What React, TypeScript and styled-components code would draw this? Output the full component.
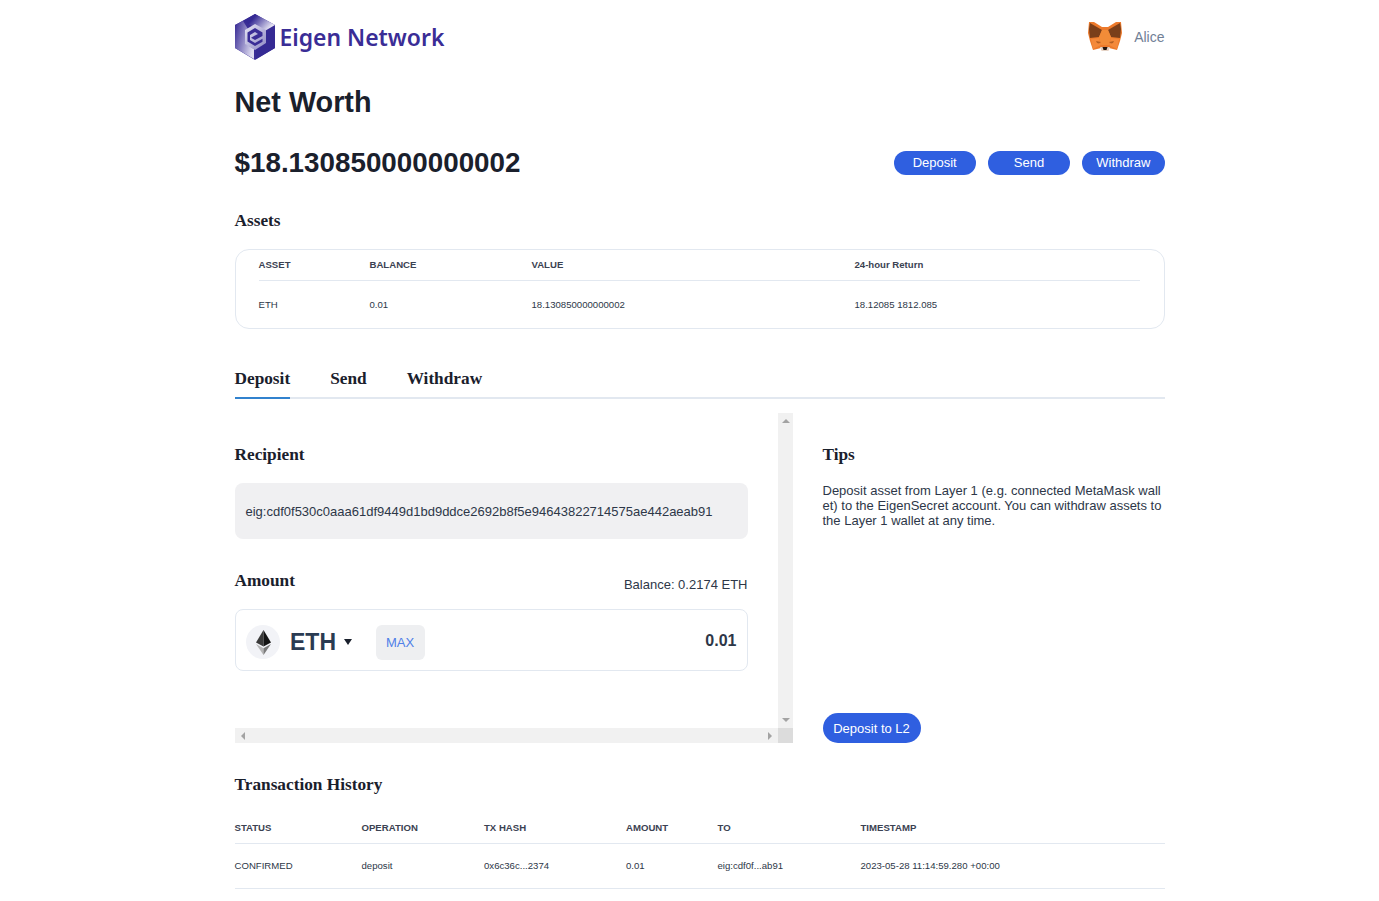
import React from "react";
import styled, { createGlobalStyle } from "styled-components";

const GlobalStyle = createGlobalStyle`
  html, body {
    margin: 0;
    padding: 0;
    background: #fff;
    font-family: "Liberation Sans", Arial, sans-serif;
    color: #1a202c;
  }
  * { box-sizing: border-box; }
`;

const Page = styled.div`
  width: 930px;
  margin-left: 234.5px;
  padding-top: 14px;
  padding-bottom: 12px;
`;
const Header = styled.header`
  display: flex;
  justify-content: space-between;
  align-items: center;
  height: 46px;
`;
const Brand = styled.div`
  display: flex;
  align-items: center;
  gap: 5px;
`;
const BrandName = styled.span`
  font-family: "Noto Sans", "Open Sans", sans-serif;
  font-weight: 600;
  font-size: 22.9px;
  color: #3a2d96;
  line-height: 46px;
  padding-top: 1px;
`;
const Account = styled.div`
  display: flex;
  align-items: center;
  gap: 12px;
  font-size: 14px;
  color: #718096;
`;
const Title = styled.h1`
  margin: 24px 0 0;
  font-size: 28.8px;
  line-height: 36px;
  font-weight: 700;
`;
const WorthRow = styled.div`
  display: flex;
  justify-content: space-between;
  align-items: center;
  margin-top: 25px;
  height: 36px;
`;
const WorthValue = styled.div`
  font-size: 27.8px;
  font-weight: 700;
  line-height: 36px;
`;
const Actions = styled.div`
  display: flex;
  gap: 12px;
`;
const PillButton = styled.button`
  width: 82.33px;
  height: 24px;
  border: none;
  border-radius: 12px;
  padding: 0 0 1px;
  background: #2f5fe0;
  color: #fff;
  font-family: inherit;
  font-size: 13px;
`;
const SerifHeading = styled.h2<{ $top?: number }>`
  margin: ${(p) => p.$top ?? 0}px 0 0;
  font-family: "Liberation Serif", "Times New Roman", serif;
  font-weight: 700;
  font-size: 17.28px;
  line-height: 20px;
`;
const AssetsCard = styled.div`
  margin-top: 18px;
  height: 80px;
  border: 1px solid #e2e8f0;
  border-radius: 14px;
  padding: 0 24px 0 23px;
`;
const Table = styled.table`
  width: 100%;
  border-collapse: collapse;
  table-layout: fixed;
`;
const Th = styled.th<{ $w?: number }>`
  width: ${(p) => (p.$w ? `${p.$w}px` : "auto")};
  padding: 0;
  height: 30px;
  text-align: left;
  font-size: 9.6px;
  font-weight: 700;
  color: #3b4252;
  border-bottom: 1px solid #e2e8f0;
`;
const HistoryTh = styled(Th)`
  height: 48px;
  padding-top: 18px;
`;
const Td = styled.td<{ $h: number }>`
  padding: 0;
  height: ${(p) => p.$h}px;
  font-size: 9.6px;
  color: #2d3748;
`;
const HistoryRowCell = styled(Td)`
  border-bottom: 1px solid #e2e8f0;
`;
const TabBar = styled.div`
  display: flex;
  gap: 40px;
  margin-top: 30px;
  height: 40px;
  border-bottom: 2px solid #e2e8f0;
`;
const Tab = styled.div<{ $active?: boolean }>`
  height: 40px;
  padding-top: 10px;
  font-family: "Liberation Serif", "Times New Roman", serif;
  font-weight: 700;
  font-size: 17.28px;
  line-height: 20px;
  color: #1a202c;
  border-bottom: 2px solid ${(p) => (p.$active ? "#3182ce" : "transparent")};
`;
const TabBody = styled.div`
  display: flex;
  gap: 29.5px;
  margin-top: 14px;
  height: 330px;
`;
/* the scroll area keeps its classic scrollbars, drawn as the grid's right and bottom tracks */
const ScrollPane = styled.div`
  flex: none;
  display: grid;
  grid-template-columns: 543.5px 15px;
  grid-template-rows: 315px 15px;
`;
const TrackV = styled.div`
  background: #f1f1f1;
  display: flex;
  flex-direction: column;
  justify-content: space-between;
  align-items: center;
  padding: 6px 0 6px;
`;
const TrackH = styled.div`
  background: #f1f1f1;
  display: flex;
  justify-content: space-between;
  align-items: center;
  padding: 0 6px;
`;
const TrackCorner = styled.div`
  background: #dcdcdc;
`;
const ArrowUp = styled.span`
  border-left: 4px solid transparent;
  border-right: 4px solid transparent;
  border-bottom: 4px solid #a3a3a3;
`;
const ArrowDown = styled.span`
  border-left: 4px solid transparent;
  border-right: 4px solid transparent;
  border-top: 4px solid #a3a3a3;
`;
const ArrowLeft = styled.span`
  border-top: 4px solid transparent;
  border-bottom: 4px solid transparent;
  border-right: 4px solid #a3a3a3;
`;
const ArrowRight = styled.span`
  border-top: 4px solid transparent;
  border-bottom: 4px solid transparent;
  border-left: 4px solid #a3a3a3;
`;
const FormColumn = styled.div`
  width: 513px;
  padding-top: 32px;
`;
const RecipientBox = styled.div`
  margin-top: 18px;
  height: 56px;
  display: flex;
  align-items: center;
  padding: 0 11px;
  background: #f0f0f2;
  border-radius: 8px;
  font-size: 13px;
  color: #2d3748;
  white-space: nowrap;
`;
const AmountHead = styled.div`
  display: flex;
  justify-content: space-between;
  align-items: flex-end;
  margin-top: 32px;
  height: 20px;
`;
const BalanceText = styled.span`
  font-size: 13px;
  color: #2d3748;
  line-height: 16px;
  margin-bottom: -2px;
`;
const AmountBox = styled.div`
  margin-top: 18px;
  height: 62px;
  display: flex;
  align-items: center;
  padding: 4px 11px 0 10.5px;
  border: 1px solid #e2e8f0;
  border-radius: 8px;
`;
const TokenCircle = styled.div`
  width: 34px;
  height: 34px;
  border-radius: 50%;
  background: #f2f3f7;
  display: flex;
  align-items: center;
  justify-content: center;
`;
const TokenName = styled.span`
  margin-left: 10px;
  font-size: 23px;
  font-weight: 700;
  color: #2a3b52;
`;
const Caret = styled.span`
  margin-left: 8px;
  width: 0;
  height: 0;
  border-left: 4.5px solid transparent;
  border-right: 4.5px solid transparent;
  border-top: 6px solid #1a202c;
`;
const MaxButton = styled.button`
  margin-left: 23.5px;
  width: 49px;
  height: 35px;
  border: none;
  border-radius: 6px;
  padding: 0;
  background: #eeeff1;
  color: #4f7fe8;
  font-family: inherit;
  font-size: 13px;
`;
const AmountValue = styled.span`
  margin: 0 -1px 3px auto;
  font-size: 16px;
  font-weight: 700;
  color: #2d3748;
`;
const TipsColumn = styled.div`
  flex: 1;
  display: flex;
  flex-direction: column;
  padding-top: 32px;
`;
const TipsText = styled.p`
  margin: 18px 0 0;
  font-size: 13px;
  line-height: 15px;
  color: #2d3748;
  word-break: break-all;
`;
const SubmitButton = styled.button`
  margin-top: auto;
  align-self: flex-start;
  width: 98px;
  height: 30px;
  border: none;
  border-radius: 15px;
  padding: 0;
  background: #2f5fe0;
  color: #fff;
  font-family: inherit;
  font-size: 13px;
`;

const EigenLogo = () => (
  <svg width="40" height="46" viewBox="0 0 40 46">
    <defs>
      <linearGradient id="eg-left" x1="0" y1="0.1" x2="1" y2="0.6">
        <stop offset="0" stopColor="#3a2d96" />
        <stop offset="1" stopColor="#dedcf0" />
      </linearGradient>
      <linearGradient id="eg-top" x1="0" y1="0" x2="1" y2="0.5">
        <stop offset="0.35" stopColor="#352a94" />
        <stop offset="1" stopColor="#e9e8f5" />
      </linearGradient>
      <linearGradient id="eg-core" x1="0" y1="0" x2="1" y2="1">
        <stop offset="0" stopColor="#e8e7f4" />
        <stop offset="1" stopColor="#8d88c4" />
      </linearGradient>
    </defs>
    <polygon points="20,0 40,11 40,34 20,46 0,34 0,11" fill="#3a2d96" />
    <polygon points="20,0 40,11 28,18 8,7" fill="url(#eg-top)" />
    <polygon points="0,11 8,7 13,15 11,30 19,35 19,45 0,34" fill="url(#eg-left)" />
    <polygon points="21,36 30,30 30,18 40,12 40,34 21,45" fill="#352a94" />
    <polygon points="20,10 31,16 31,29 20,36 10,30 10,16" fill="url(#eg-core)" />
    <path d="M20 14 L27.5 18.5 V22 L20 26 L16 23.8 L20 21.5 L23 20 L20 18 L15 21 V26 L20 29 L27.5 24.8 V27.8 L20 32 L12.5 27.5 V18.5 Z" fill="#3a2d96" />
  </svg>
);

const FoxLogo = () => (
  <svg width="34" height="32" viewBox="0 0 34 32">
    <polygon points="1,1 6,1 14,6 20,6 28,1 33,1 34,12 32,20 29,29 21,27 20,30 14,30 13,27 5,29 2,20 0,12" fill="#ec7a2c" />
    <polygon points="2,2 14,9 11,16 2,17 1,8" fill="#7a3f1a" />
    <polygon points="32,2 20,9 23,16 32,17 33,8" fill="#7a3f1a" />
    <polygon points="14,9 20,9 23,16 21,24 13,24 11,16" fill="#f28c38" />
    <polygon points="3,18 11,17 13,24 7,27 5,28" fill="#f4893a" />
    <polygon points="31,18 23,17 21,24 27,27 29,28" fill="#f4893a" />
    <polygon points="8,20 13,21 11,22.5 9,22" fill="#b45f22" />
    <polygon points="26,20 21,21 23,22.5 25,22" fill="#b45f22" />
    <polygon points="12,26 22,26 20,30 14,30" fill="#e4d3c6" />
    <polygon points="14.5,26 19.5,26 18.5,29 15.5,29" fill="#24150c" />
  </svg>
);

const EthIcon = () => (
  <svg width="15" height="25" viewBox="0 0 15 25">
    <polygon points="7.5,0 0,12.5 7.5,16.5" fill="#3a3a3a" />
    <polygon points="7.5,0 15,12.5 7.5,16.5" fill="#141414" />
    <polygon points="0,14 7.5,25 7.5,18.2" fill="#b5b5b5" />
    <polygon points="15,14 7.5,25 7.5,18.2" fill="#7a7a7a" />
  </svg>
);

const assets = [
  { label: "ASSET", w: 111 },
  { label: "BALANCE", w: 162 },
  { label: "VALUE", w: 323 },
  { label: "24-hour Return" },
];
const assetRow = ["ETH", "0.01", "18.130850000000002", "18.12085 1812.085"];

const history = [
  { label: "STATUS", w: 127 },
  { label: "OPERATION", w: 122.5 },
  { label: "TX HASH", w: 142 },
  { label: "AMOUNT", w: 91.5 },
  { label: "TO", w: 143 },
  { label: "TIMESTAMP" },
];
const historyRow = [
  "CONFIRMED",
  "deposit",
  "0x6c36c...2374",
  "0.01",
  "eig:cdf0f...ab91",
  "2023-05-28 11:14:59.280 +00:00",
];

export default function App() {
  return (
    <Page>
      <GlobalStyle />
      <Header>
        <Brand>
          <EigenLogo />
          <BrandName>Eigen Network</BrandName>
        </Brand>
        <Account>
          <FoxLogo />
          Alice
        </Account>
      </Header>

      <Title>Net Worth</Title>
      <WorthRow>
        <WorthValue>$18.130850000000002</WorthValue>
        <Actions>
          <PillButton>Deposit</PillButton>
          <PillButton>Send</PillButton>
          <PillButton>Withdraw</PillButton>
        </Actions>
      </WorthRow>

      <SerifHeading $top={30}>Assets</SerifHeading>
      <AssetsCard>
        <Table>
          <thead>
            <tr>
              {assets.map((c) => (
                <Th key={c.label} $w={c.w}>{c.label}</Th>
              ))}
            </tr>
          </thead>
          <tbody>
            <tr>
              {assetRow.map((v) => (
                <Td key={v} $h={48}>{v}</Td>
              ))}
            </tr>
          </tbody>
        </Table>
      </AssetsCard>

      <TabBar>
        <Tab $active>Deposit</Tab>
        <Tab>Send</Tab>
        <Tab>Withdraw</Tab>
      </TabBar>

      <TabBody>
        <ScrollPane>
          <FormColumn>
            <SerifHeading>Recipient</SerifHeading>
            <RecipientBox>eig:cdf0f530c0aaa61df9449d1bd9ddce2692b8f5e94643822714575ae442aeab91</RecipientBox>
            <AmountHead>
              <SerifHeading>Amount</SerifHeading>
              <BalanceText>Balance: 0.2174 ETH</BalanceText>
            </AmountHead>
            <AmountBox>
              <TokenCircle>
                <EthIcon />
              </TokenCircle>
              <TokenName>ETH</TokenName>
              <Caret />
              <MaxButton>MAX</MaxButton>
              <AmountValue>0.01</AmountValue>
            </AmountBox>
          </FormColumn>
          <TrackV>
            <ArrowUp />
            <ArrowDown />
          </TrackV>
          <TrackH>
            <ArrowLeft />
            <ArrowRight />
          </TrackH>
          <TrackCorner />
        </ScrollPane>
        <TipsColumn>
          <SerifHeading>Tips</SerifHeading>
          <TipsText>
            Deposit asset from Layer 1 (e.g. connected MetaMask wallet) to the EigenSecret account. You can withdraw assets to the Layer 1 wallet at any time.
          </TipsText>
          <SubmitButton>Deposit to L2</SubmitButton>
        </TipsColumn>
      </TabBody>

      <SerifHeading $top={32}>Transaction History</SerifHeading>
      <Table>
        <thead>
          <tr>
            {history.map((c) => (
              <HistoryTh key={c.label} $w={c.w}>{c.label}</HistoryTh>
            ))}
          </tr>
        </thead>
        <tbody>
          <tr>
            {historyRow.map((v) => (
              <HistoryRowCell key={v} $h={45}>{v}</HistoryRowCell>
            ))}
          </tr>
        </tbody>
      </Table>
    </Page>
  );
}
